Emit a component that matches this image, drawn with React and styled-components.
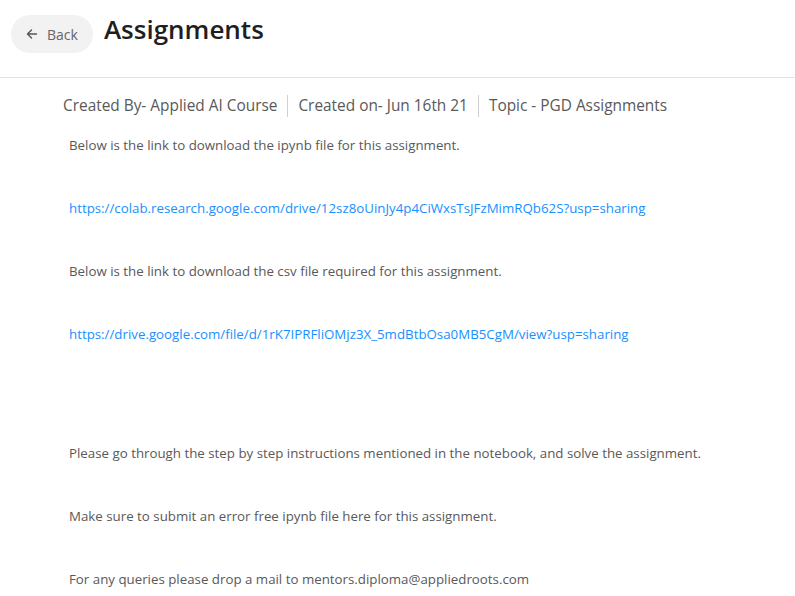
import styled, { createGlobalStyle } from 'styled-components'

const GlobalStyle = createGlobalStyle`
   body {
      margin: 0;
      background: #ffffff;
      font-family: "Open Sans", "Noto Sans", Arial, sans-serif;
   }
`

const Page = styled.div`
   width: 795px;
   height: 596px;
   overflow: hidden;
`

const Header = styled.header`
   display: flex;
   align-items: flex-start;
   gap: 11px;
   height: 78px;
   padding: 15px 11px 0;
   box-sizing: border-box;
   border-bottom: 1px solid #e3e3e3;
`

const BackButton = styled.button`
   display: flex;
   align-items: center;
   gap: 9px;
   height: 38px;
   padding: 0 15px;
   border: none;
   border-radius: 19px;
   background: #f2f2f2;
   color: #666666;
   font-family: inherit;
   font-size: 14px;
   cursor: pointer;
`

const Title = styled.h1`
   margin: -2px 0 0;
   font-size: 26px;
   font-weight: 600;
   color: #1f1f1f;
   line-height: 32px;
`

const MetaRow = styled.div`
   display: flex;
   align-items: center;
   padding: 17px 0 0 63px;
`

const MetaItem = styled.span`
   font-size: 15.4px;
   color: #595959;
   line-height: 22px;
   padding: 0 10px;
   border-left: ${(p) => (p.$first ? 'none' : '1px solid #d0d0d0')};
   padding-left: ${(p) => (p.$first ? '0' : '10px')};
`

const Body = styled.div`
   display: flex;
   flex-direction: column;
   padding: 18px 0 0 69px;
`

const Para = styled.p`
   margin: 0;
   height: ${(p) => (p.$height ? `${p.$height}px` : 'auto')};
   font-size: 13.3px;
   line-height: 20px;
   color: #595959;
`

const Link = styled.a`
   color: #1890ff;
   text-decoration: none;
`

const ArrowLeft = () => (
   <svg width="12" height="12" viewBox="0 0 12 12" fill="none" stroke="#555" strokeWidth="1.4" strokeLinecap="round" strokeLinejoin="round">
      <path d="M10.5 6H1.5M5.5 2L1.5 6L5.5 10" />
   </svg>
)

const App = () => {
   return (
      <Page>
         <GlobalStyle />
         <Header>
            <BackButton>
               <ArrowLeft />
               Back
            </BackButton>
            <Title>Assignments</Title>
         </Header>

         <MetaRow>
            <MetaItem $first>Created By- Applied AI Course</MetaItem>
            <MetaItem>Created on- Jun 16th 21</MetaItem>
            <MetaItem>Topic - PGD Assignments</MetaItem>
         </MetaRow>

         <Body>
            <Para $height={63}>Below is the link to download the ipynb file for this assignment.</Para>
            <Para $height={63}>
               <Link href="#">https://colab.research.google.com/drive/12sz8oUinJy4p4CiWxsTsJFzMimRQb62S?usp=sharing</Link>
            </Para>
            <Para $height={63}>Below is the link to download the csv file required for this assignment.</Para>
            <Para $height={119}>
               <Link href="#">https://drive.google.com/file/d/1rK7IPRFliOMjz3X_5mdBtbOsa0MB5CgM/view?usp=sharing</Link>
            </Para>
            <Para $height={63}>Please go through the step by step instructions mentioned in the notebook, and solve the assignment.</Para>
            <Para $height={63}>Make sure to submit an error free ipynb file here for this assignment.</Para>
            <Para>For any queries please drop a mail to mentors.diploma@appliedroots.com</Para>
         </Body>
      </Page>
   )
}

export default App
